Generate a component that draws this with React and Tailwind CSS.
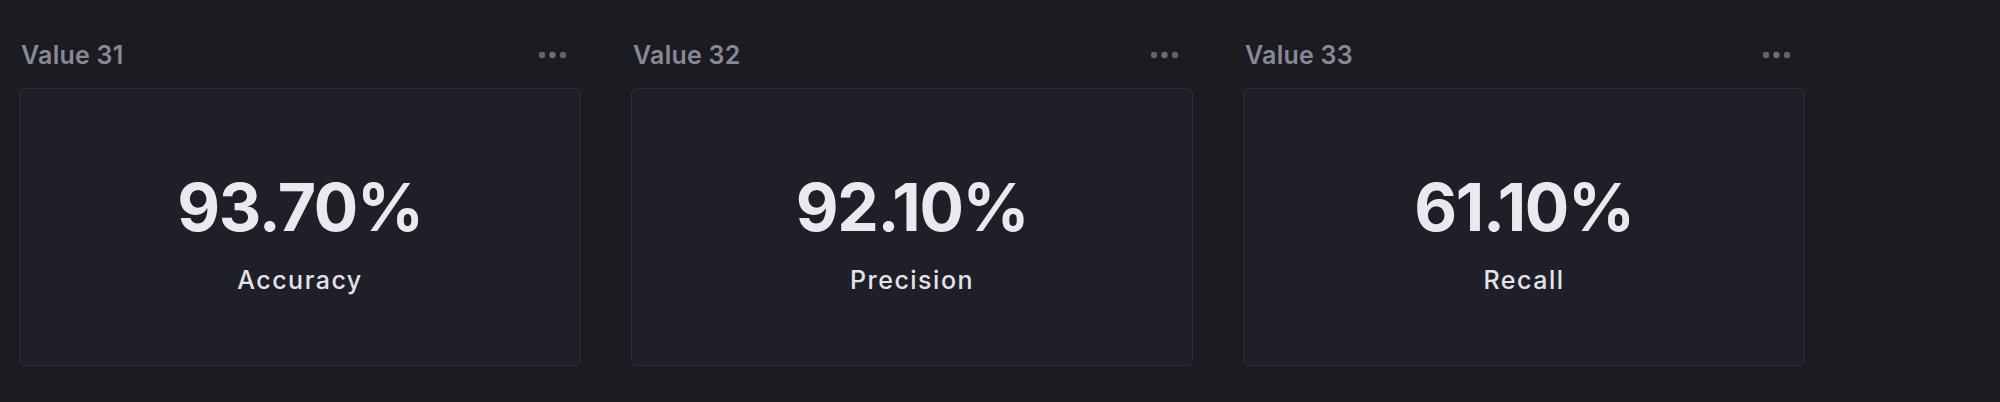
import React from "react";

const items = [
  { title: "Value 31", value: "93.70%", label: "Accuracy" },
  { title: "Value 32", value: "92.10%", label: "Precision" },
  { title: "Value 33", value: "61.10%", label: "Recall" },
];

function Dots() {
  return (
    <svg width="29" height="8" viewBox="0 0 29 8" className="block">
      <circle cx="4" cy="4" r="3.2" fill="#60626d" />
      <circle cx="14.5" cy="4" r="3.2" fill="#6a6c78" />
      <circle cx="25" cy="4" r="3.2" fill="#60626d" />
    </svg>
  );
}

function Panel({ title, value, label }) {
  return (
    <div className="flex w-[562px] flex-col">
      <div className="flex h-[40px] items-center justify-between pl-[2px] pr-[14px]">
        <span className="text-[25px] font-semibold leading-none tracking-[0.01em] text-[#878995]">
          {title}
        </span>
        <Dots />
      </div>
      <div className="mt-[13px] flex h-[278px] flex-col items-center rounded-[6px] border border-[#2d2e3a] bg-[#1f1f29] pt-[85px]">
        <div className="text-[66px] font-bold leading-none tracking-[-0.02em] text-[#e9e9ee]">
          {value}
        </div>
        <div className="mt-[28px] text-[25px] font-medium leading-none tracking-[0.06em] text-[#e2e3e8]">
          {label}
        </div>
      </div>
    </div>
  );
}

export default function App() {
  return (
    <div
      className="flex h-[402px] w-[2000px] gap-[50px] bg-[#1b1b22] px-[19px] pt-[35px]"
      style={{ fontFamily: "Inter, 'Noto Sans', sans-serif" }}
    >
      {items.map((it) => (
        <Panel key={it.title} {...it} />
      ))}
    </div>
  );
}
